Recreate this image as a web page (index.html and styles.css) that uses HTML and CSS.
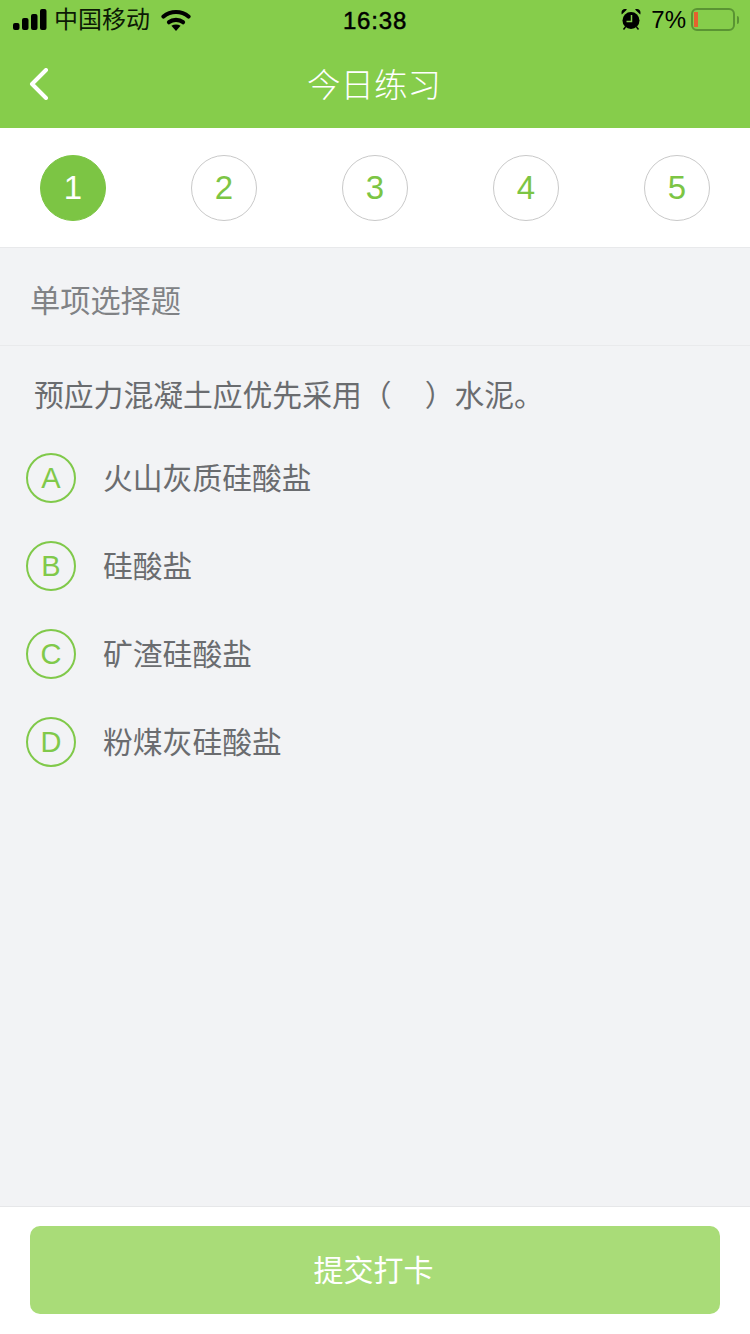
FILE: index.html
```html
<!DOCTYPE html>
<html lang="zh-CN">

<head>
    <meta charset="UTF-8">
    <title>今日练习</title>
    <link rel="stylesheet" href="styles.css">
</head>

<body>
    <header class="top">
        <div class="status">
            <div class="status-left">
                <svg class="signal" width="34" height="21" viewBox="0 0 34 21">
                    <rect x="0" y="14" width="6.500" height="7" rx="2" />
                    <rect x="9" y="9" width="6.500" height="12" rx="2" />
                    <rect x="18" y="5" width="6.500" height="16" rx="2" />
                    <rect x="27" y="0" width="6.500" height="21" rx="2" />
                </svg>
                <span class="carrier">中国移动</span>
                <svg class="wifi" width="30" height="22" viewBox="0 0 30 22">
                    <path class="wifi-arc" d="M2.500 7.500C9.500 1.500 20.500 1.500 27.500 7.500" />
                    <path class="wifi-arc" d="M8 13.200C11.800 10.200 18.200 10.200 22 13.200" />
                    <path d="M15 22l-4.600-5.200c2.800-1.800 6.400-1.800 9.200 0z" />
                </svg>
            </div>
            <div class="clock">16:38</div>
            <div class="status-right">
                <svg class="alarm" width="20" height="22" viewBox="0 0 20 22">
                    <circle cx="10" cy="12.500" r="8.500" />
                    <path d="M0.800 6.500C-0.500 2.500 2.500 0 6 1.500zM19.200 6.500C20.500 2.500 17.500 0 14 1.500z" />
                    <path class="alarm-hand" d="M10.500 7v6.500H5.500" />
                    <path class="alarm-leg" d="M4.500 19l-2 2.500M15.500 19l2 2.500" />
                </svg>
                <span class="percent">7%</span>
                <div class="battery">
                    <div class="battery-level"></div>
                </div>
                <div class="battery-tip"></div>
            </div>
        </div>
        <nav class="nav">
            <svg class="back" width="20" height="32" viewBox="0 0 20 32">
                <path d="M17 2L3 16l14 14" />
            </svg>
            <h1>今日练习</h1>
        </nav>
    </header>

    <div class="steps">
        <div class="step active">1</div>
        <div class="step">2</div>
        <div class="step">3</div>
        <div class="step">4</div>
        <div class="step">5</div>
    </div>

    <main class="content">
        <div class="type">单项选择题</div>
        <div class="question">预应力混凝土应优先采用（&nbsp;&nbsp;&nbsp;&nbsp;）水泥。</div>
        <ul class="options">
            <li class="option"><span class="letter">A</span><span class="option-text">火山灰质硅酸盐</span></li>
            <li class="option"><span class="letter">B</span><span class="option-text">硅酸盐</span></li>
            <li class="option"><span class="letter">C</span><span class="option-text">矿渣硅酸盐</span></li>
            <li class="option"><span class="letter">D</span><span class="option-text">粉煤灰硅酸盐</span></li>
        </ul>
    </main>

    <footer class="bottom">
        <button class="submit">提交打卡</button>
    </footer>
</body>

</html>
```

FILE: styles.css
```css
html,
body {
    margin: 0;
    height: 100%;
}

body {
    width: 750px;
    height: 1334px;
    display: flex;
    flex-direction: column;
    overflow: hidden;
    background: #f2f3f5;
    font-family: "Liberation Sans", "Noto Sans CJK SC", sans-serif;
}

.top {
    height: 128px;
    background: #86cd4b;
}

.status {
    height: 40px;
    display: flex;
    align-items: center;
    justify-content: space-between;
    padding: 0 11px 0 13px;
    color: #000;
    position: relative;
}

.status-left,
.status-right {
    display: flex;
    align-items: center;
}

.signal {
    margin-top: -1px;
}

.carrier {
    margin-left: 7px;
    font-size: 24px;
    line-height: 40px;
    color: #0c1a05;
}

.wifi {
    margin-left: 11px;
    margin-top: -1px;
}

.wifi-arc {
    fill: none;
    stroke: #000;
    stroke-width: 4.200;
    stroke-linecap: round;
}

.clock {
    position: absolute;
    left: 0;
    right: 0;
    top: 7px;
    text-align: center;
    font-size: 24px;
    letter-spacing: 0.8px;
    -webkit-text-stroke: 0.5px #000;
}

.alarm {
    margin-top: -2px;
}

.alarm-hand {
    fill: none;
    stroke: #86cd4b;
    stroke-width: 1.500;
}

.alarm-leg {
    fill: none;
    stroke: #000;
    stroke-width: 1.500;
}

.percent {
    margin-left: 10px;
    font-size: 24px;
    line-height: 40px;
}

.battery {
    width: 44px;
    height: 23px;
    margin: -1px 0 0 5px;
    box-sizing: border-box;
    border: 2px solid #5a9433;
    border-radius: 6px;
    padding: 2px 1px;
}

.battery-level {
    width: 4px;
    height: 15px;
    background: #e5622e;
}

.battery-tip {
    width: 2px;
    height: 8px;
    margin-left: 2px;
    background: #5a9433;
    border-radius: 0 2px 2px 0;
}

.nav {
    height: 88px;
    display: flex;
    align-items: center;
    justify-content: center;
    position: relative;
}

.nav h1 {
    margin: 0 2px 4px 0;
    font-size: 33.500px;
    font-weight: 300;
    color: #fff;
}

.back {
    position: absolute;
    left: 29px;
    top: 28px;
    fill: none;
    stroke: #fff;
    stroke-width: 4;
    stroke-linecap: round;
    stroke-linejoin: round;
}

.steps {
    height: 120px;
    box-sizing: border-box;
    display: flex;
    justify-content: space-between;
    padding: 27px 40px 0;
    background: #fff;
    border-bottom: 1px solid #e8e9eb;
    flex-shrink: 0;
}

.step {
    width: 66px;
    height: 66px;
    box-sizing: border-box;
    display: flex;
    align-items: center;
    justify-content: center;
    border: 1px solid #c9c9c9;
    border-radius: 50%;
    font-size: 33px;
    color: #7cc544;
}

.step.active {
    background: #7cc544;
    border-color: #7cc544;
    color: #fff;
}

.content {
    flex: 1;
}

.type {
    height: 98px;
    box-sizing: border-box;
    padding-left: 30px;
    line-height: 108px;
    font-size: 30.200px;
    color: #808285;
    border-bottom: 1px solid #e9eaec;
}

.question {
    padding: 28px 0 0 34px;
    font-size: 29.800px;
    line-height: 44px;
    color: #6a6c6f;
}

.options {
    list-style: none;
    margin: 0;
    padding: 35px 0 0 26px;
}

.option {
    height: 50px;
    margin-bottom: 38px;
    display: flex;
    align-items: center;
    font-size: 29.800px;
    color: #6a6c6f;
}

.option-text {
    margin-bottom: 5px;
}

.letter {
    width: 50px;
    height: 50px;
    box-sizing: border-box;
    display: flex;
    align-items: center;
    justify-content: center;
    margin-right: 27px;
    border: 2px solid #80c94a;
    border-radius: 50%;
    font-size: 29px;
    color: #80c94a;
}

.bottom {
    height: 128px;
    box-sizing: border-box;
    padding: 19px 30px 0;
    background: #fff;
    border-top: 1px solid #e6e7e9;
}

.submit {
    display: block;
    width: 100%;
    height: 88px;
    padding: 0 3px 4px 0;
    border: 0;
    border-radius: 10px;
    background: #a9dc78;
    color: #fff;
    font-family: inherit;
    font-size: 30px;
}
```
